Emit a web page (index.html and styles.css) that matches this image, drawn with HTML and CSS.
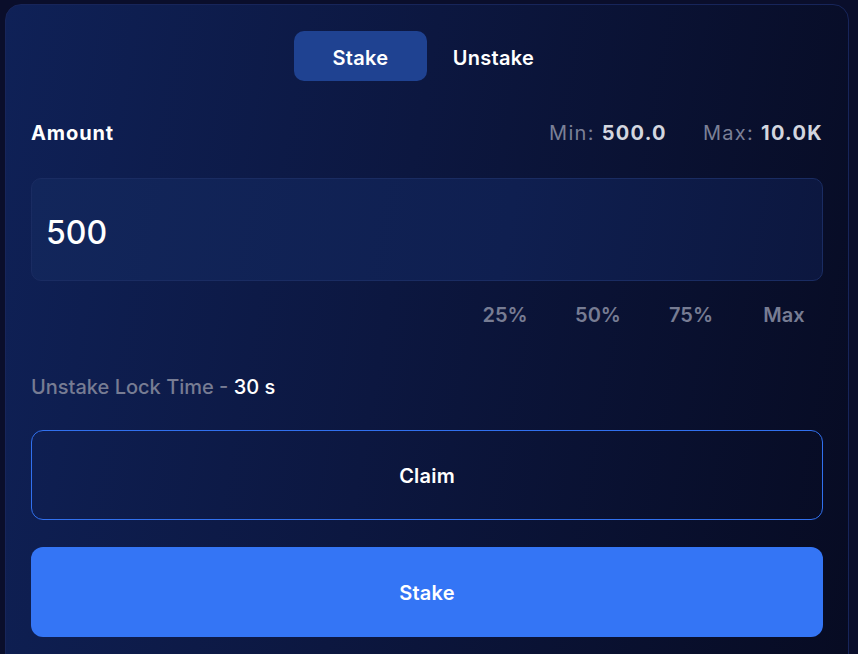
FILE: index.html
```html
<!DOCTYPE html>
<html>
<head>
<meta charset="utf-8">
<link rel="stylesheet" href="styles.css">
</head>
<body>
<div class="card">
  <div class="tabs">
    <button class="tab active">Stake</button>
    <button class="tab">Unstake</button>
  </div>
  <div class="amount-row">
    <span class="label">Amount</span>
    <div class="limits">
      <span class="limit">Min: <b>500.0</b></span>
      <span class="limit">Max: <b>10.0K</b></span>
    </div>
  </div>
  <div class="input">500</div>
  <div class="pcts">
    <span class="pct">25%</span>
    <span class="pct">50%</span>
    <span class="pct">75%</span>
    <span class="pct">Max</span>
  </div>
  <div class="lock">Unstake Lock Time - <span class="lock-val">30 s</span></div>
  <button class="btn claim">Claim</button>
  <button class="btn stake">Stake</button>
</div>
</body>
</html>
```
FILE: styles.css
```css
* { box-sizing: border-box; }
html, body { margin: 0; padding: 0; }
body {
  background: #0a0e2b;
  font-family: Inter, "Noto Sans", sans-serif;
  color: #fff;
  height: 654px;
  overflow: hidden;
  padding: 4px 9px 0 5px;
}
.card {
  width: 844px;
  height: 700px;
  border: 1px solid #17255a;
  border-radius: 16px;
  background: linear-gradient(100deg, #0f2157 0%, #0c1740 45%, #070b22 100%);
  padding: 26px 25px 0 25px;
}
.tabs {
  display: flex;
  justify-content: center;
}
.tab {
  width: 133px;
  height: 50px;
  border: none;
  border-radius: 10px;
  background: transparent;
  color: #fff;
  font-family: inherit;
  font-size: 20px;
  font-weight: 600;
  letter-spacing: 0.3px;
  padding: 3px 0 0 0;
}
.tab.active { background: #1f4291; }
.amount-row {
  display: flex;
  justify-content: space-between;
  align-items: center;
  margin-top: 40px;
  height: 24px;
}
.label { font-size: 20px; font-weight: 700; letter-spacing: 0.9px; }
.limits { display: flex; gap: 36px; }
.limit { font-size: 20px; color: #7b8097; letter-spacing: 1.3px; }
.limit b { color: #d3d6df; font-weight: 700; }
.input {
  margin-top: 33px;
  height: 103px;
  border: 1px solid #1a2c62;
  border-radius: 10px;
  background: linear-gradient(100deg, #12265b 0%, #0f1f50 60%, #0c173f 100%);
  display: flex;
  align-items: center;
  padding: 5px 0 0 14px;
  font-size: 32px;
  font-weight: 500;
}
.pcts {
  display: flex;
  justify-content: flex-end;
  gap: 15px;
  margin-top: 22px;
  height: 24px;
  align-items: center;
}
.pct {
  width: 78px;
  text-align: center;
  color: #777c93;
  font-size: 20px;
  font-weight: 600;
}
.lock {
  margin-top: 48px;
  height: 24px;
  font-size: 20px;
  font-weight: 500;
  color: #777c93;
  letter-spacing: 0;
}
.lock-val { color: #fff; }
.btn {
  display: block;
  width: 100%;
  height: 90px;
  border-radius: 12px;
  font-family: inherit;
  font-size: 20px;
  font-weight: 600;
  color: #fff;
  letter-spacing: 0.2px;
  padding-top: 3px;
}
.claim {
  margin-top: 31px;
  border: 1px solid #3170ee;
  background: transparent;
}
.stake {
  margin-top: 27px;
  border: none;
  background: #3475f5;
}
```
